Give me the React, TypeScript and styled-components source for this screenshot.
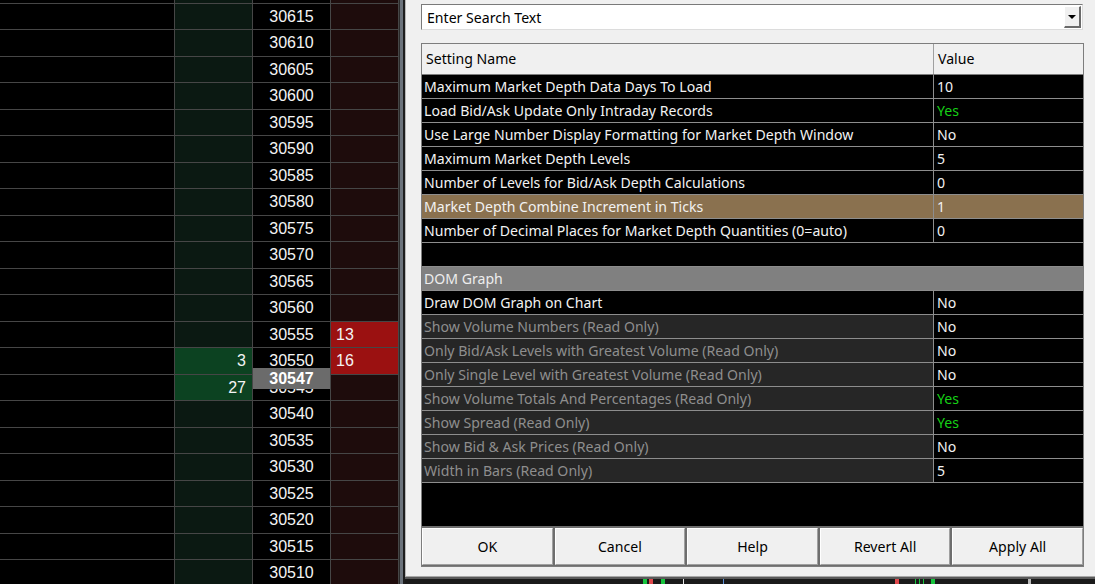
import React from "react";
import styled, { createGlobalStyle, css } from "styled-components";

const GlobalStyle = createGlobalStyle`
  html, body {
    margin: 0;
    padding: 0;
    background: #000;
    overflow: hidden;
  }
  body {
    font-family: "Liberation Sans", Arial, sans-serif;
  }
`;

const Screen = styled.div`
  display: flex;
  width: 1095px;
  height: 584px;
  overflow: hidden;
  background: #000;
`;

/* ---------- DOM ladder ---------- */

const DomPanel = styled.div`
  position: relative;
  flex: none;
  width: 399px;
  height: 100%;
  overflow: hidden;
  background: #000;
`;

const DomRows = styled.div`
  margin-top: -23px;
`;

// rows alternate 27 / 26 px, as the ladder does on screen
const DomRow = styled.div<{ $tall: boolean }>`
  display: grid;
  grid-template-columns: 175px 78px 78px 68px;
  height: ${(p) => (p.$tall ? 27 : 26)}px;
`;

type CellKind = "blank" | "bid" | "price" | "ask";

const cellBg: Record<CellKind, string> = {
  blank: "#000",
  bid: "#0b1912",
  price: "#000",
  ask: "#1e0c0c",
};

const DomCell = styled.div<{ $kind: CellKind; $filled?: boolean }>`
  box-sizing: border-box;
  display: flex;
  align-items: center;
  justify-content: ${(p) =>
    p.$kind === "bid" ? "flex-end" : p.$kind === "ask" ? "flex-start" : "center"};
  border-right: 1px solid #464646;
  border-bottom: 1px solid #464646;
  background: ${(p) =>
    p.$filled ? (p.$kind === "bid" ? "#0c4221" : "#9b1111") : cellBg[p.$kind]};
  color: #f4f4f4;
  font-size: 16px;
  white-space: nowrap;
  padding: ${(p) =>
    p.$kind === "bid" ? "0 6px 0 0" : p.$kind === "ask" ? "0 0 0 5px" : "0"};
`;

const LastPrice = styled.div`
  position: absolute;
  left: 253px;
  top: 368px;
  width: 77px;
  height: 21px;
  background: #6b6b6b;
  color: #fff;
  font-weight: bold;
  font-size: 16px;
  line-height: 21px;
  text-align: center;
`;

const Splitter = styled.div`
  flex: none;
  width: 3px;
  height: 100%;
  background: #6c737c;
  border-left: 1px solid #2b2b2b;
  border-right: 2px solid #1e1e1e;
`;

/* ---------- Settings dialog ---------- */

const RightSide = styled.div`
  flex: 1;
  display: flex;
  flex-direction: column;
  min-width: 0;
`;

const Dialog = styled.div`
  box-sizing: border-box;
  flex: none;
  height: 577px;
  display: flex;
  flex-direction: column;
  padding: 4px 11px 0 15px;
  background: #f0f0f0;
  border-left: 1px solid #b8b8b8;
  border-bottom: 1px solid #a8a8a8;
  font-family: "Noto Sans", "Open Sans", sans-serif;
  font-size: 14.1px;
`;

const SearchBox = styled.div`
  box-sizing: border-box;
  display: flex;
  align-items: center;
  height: 26px;
  margin: 0 1px 13px 0;
  background: #fff;
  border-top: 1px solid #7a7a7a;
  border-left: 1px solid #7a7a7a;
  border-right: 1px solid #dcdcdc;
  border-bottom: 1px solid #dcdcdc;
  color: #000;
`;

const SearchText = styled.span`
  flex: 1;
  padding-left: 5px;
`;

const DropButton = styled.div`
  box-sizing: border-box;
  width: 17px;
  height: 22px;
  margin-right: 1px;
  display: flex;
  align-items: center;
  justify-content: center;
  background: #f0f0f0;
  border-top: 1px solid #fff;
  border-left: 1px solid #fff;
  border-right: 2px solid #6a6a6a;
  border-bottom: 2px solid #6a6a6a;
`;

const Arrow = styled.div`
  width: 0;
  height: 0;
  border-left: 4px solid transparent;
  border-right: 4px solid transparent;
  border-top: 4px solid #000;
`;

const GridFrame = styled.div`
  box-sizing: border-box;
  height: 524px;
  display: flex;
  flex-direction: column;
  border: 1px solid #7d7d7d;
  background: #000;
`;

const HeaderRow = styled.div`
  display: grid;
  grid-template-columns: 512px 1fr;
  height: 30px;
  background: #f0f0f0;
  border-bottom: 1px solid #7d7d7d;
`;

const HeaderCell = styled.div<{ $last?: boolean }>`
  box-sizing: border-box;
  padding-left: 4px;
  line-height: 30px;
  color: #000;
  ${(p) => !p.$last && "border-right: 1px solid #a0a0a0;"}
`;

type RowTone = "normal" | "selected" | "readonly";

const SettingRow = styled.div<{ $tone: RowTone }>`
  display: grid;
  grid-template-columns: 512px 1fr;
  height: 23px;
  border-bottom: 1px solid #8d8d8d;
  background: ${(p) => (p.$tone === "selected" ? "#8a714f" : "#000")};
`;

const NameCell = styled.div<{ $tone: RowTone }>`
  box-sizing: border-box;
  padding-left: 2px;
  line-height: 23px;
  white-space: nowrap;
  overflow: hidden;
  border-right: 1px solid #8d8d8d;
  ${(p) =>
    p.$tone === "readonly"
      ? css`
          color: #8e8e8e;
          background: #262626;
        `
      : css`
          color: #f2f2f2;
        `}
`;

const ValueCell = styled.div<{ $green?: boolean }>`
  padding-left: 3px;
  line-height: 23px;
  color: ${(p) => (p.$green ? "#16d016" : "#f2f2f2")};
`;

const BlankRow = styled.div`
  height: 23px;
  border-bottom: 1px solid #8d8d8d;
  background: #000;
`;

const SectionRow = styled.div`
  height: 23px;
  padding-left: 2px;
  line-height: 23px;
  border-bottom: 1px solid #8d8d8d;
  background: #808080;
  color: #ededed;
`;

const GridFiller = styled.div`
  flex: 1;
  background: #000;
`;

const ButtonBar = styled.div`
  display: flex;
  gap: 2px;
  padding: 2px 0 1px;
  background: #6e6e6e;
`;

const DialogButton = styled.div`
  box-sizing: border-box;
  flex: 1;
  height: 37px;
  display: flex;
  align-items: center;
  justify-content: center;
  background: #f0f0f0;
  border-top: 1px solid #fff;
  border-left: 1px solid #fff;
  border-right: 1px solid #a0a0a0;
  border-bottom: 1px solid #a0a0a0;
  color: #000;
`;

const ChartStrip = styled.div`
  flex: 1;
  background: #1a1a1a;
  border-top: 2px solid #5a5a5a;
  overflow: hidden;
  svg {
    display: block;
  }
`;

/* ---------- data ---------- */

const prices: number[] = [];
for (let p = 30620; p >= 30505; p -= 5) prices.push(p);

const bids: Record<number, number> = { 30550: 3, 30545: 27 };
const asks: Record<number, number> = { 30555: 13, 30550: 16 };

type Setting =
  | { kind: "item"; name: string; value: string; tone?: RowTone }
  | { kind: "blank" }
  | { kind: "section"; name: string };

const settings: Setting[] = [
  { kind: "item", name: "Maximum Market Depth Data Days To Load", value: "10" },
  { kind: "item", name: "Load Bid/Ask Update Only Intraday Records", value: "Yes" },
  {
    kind: "item",
    name: "Use Large Number Display Formatting for Market Depth Window",
    value: "No",
  },
  { kind: "item", name: "Maximum Market Depth Levels", value: "5" },
  { kind: "item", name: "Number of Levels for Bid/Ask Depth Calculations", value: "0" },
  {
    kind: "item",
    name: "Market Depth Combine Increment in Ticks",
    value: "1",
    tone: "selected",
  },
  {
    kind: "item",
    name: "Number of Decimal Places for Market Depth Quantities (0=auto)",
    value: "0",
  },
  { kind: "blank" },
  { kind: "section", name: "DOM Graph" },
  { kind: "item", name: "Draw DOM Graph on Chart", value: "No" },
  { kind: "item", name: "Show Volume Numbers (Read Only)", value: "No", tone: "readonly" },
  {
    kind: "item",
    name: "Only Bid/Ask Levels with Greatest Volume (Read Only)",
    value: "No",
    tone: "readonly",
  },
  {
    kind: "item",
    name: "Only Single Level with Greatest Volume (Read Only)",
    value: "No",
    tone: "readonly",
  },
  {
    kind: "item",
    name: "Show Volume Totals And Percentages (Read Only)",
    value: "Yes",
    tone: "readonly",
  },
  { kind: "item", name: "Show Spread (Read Only)", value: "Yes", tone: "readonly" },
  { kind: "item", name: "Show Bid & Ask Prices (Read Only)", value: "No", tone: "readonly" },
  { kind: "item", name: "Width in Bars (Read Only)", value: "5", tone: "readonly" },
];

const buttons = ["OK", "Cancel", "Help", "Revert All", "Apply All"];

const chartMarks = [
  { x: 238, w: 4, c: "#16c43c" },
  { x: 244, w: 4, c: "#e0484c" },
  { x: 256, w: 4, c: "#16c43c" },
  { x: 278, w: 1, c: "#e8e8e8" },
  { x: 318, w: 1, c: "#5a8fd8" },
  { x: 490, w: 4, c: "#e0484c" },
  { x: 510, w: 1, c: "#16c43c" },
  { x: 514, w: 1, c: "#16c43c" },
  { x: 518, w: 1, c: "#16c43c" },
  { x: 526, w: 4, c: "#16c43c" },
  { x: 623, w: 3, c: "#b8b8b8" },
];

export default function App() {
  return (
    <>
      <GlobalStyle />
      <Screen>
        <DomPanel>
          <DomRows>
            {prices.map((p, i) => (
              <DomRow key={p} $tall={i % 2 === 0}>
                <DomCell $kind="blank" />
                <DomCell $kind="bid" $filled={bids[p] !== undefined}>
                  {bids[p]}
                </DomCell>
                <DomCell $kind="price">{p}</DomCell>
                <DomCell $kind="ask" $filled={asks[p] !== undefined}>
                  {asks[p]}
                </DomCell>
              </DomRow>
            ))}
          </DomRows>
          <LastPrice>30547</LastPrice>
        </DomPanel>
        <Splitter />
        <RightSide>
          <Dialog>
            <SearchBox>
              <SearchText>Enter Search Text</SearchText>
              <DropButton>
                <Arrow />
              </DropButton>
            </SearchBox>
            <GridFrame>
              <HeaderRow>
                <HeaderCell>Setting Name</HeaderCell>
                <HeaderCell $last>Value</HeaderCell>
              </HeaderRow>
              {settings.map((s, i) => {
                if (s.kind === "blank") return <BlankRow key={i} />;
                if (s.kind === "section")
                  return <SectionRow key={i}>{s.name}</SectionRow>;
                const tone = s.tone ?? "normal";
                return (
                  <SettingRow key={i} $tone={tone}>
                    <NameCell $tone={tone}>{s.name}</NameCell>
                    <ValueCell $green={s.value === "Yes"}>{s.value}</ValueCell>
                  </SettingRow>
                );
              })}
              <GridFiller />
              <ButtonBar>
                {buttons.map((b) => (
                  <DialogButton key={b}>{b}</DialogButton>
                ))}
              </ButtonBar>
            </GridFrame>
          </Dialog>
          <ChartStrip>
            <svg width="690" height="6">
              {chartMarks.map((m, i) => (
                <rect key={i} x={m.x} y={0} width={m.w} height={6} fill={m.c} />
              ))}
            </svg>
          </ChartStrip>
        </RightSide>
      </Screen>
    </>
  );
}
